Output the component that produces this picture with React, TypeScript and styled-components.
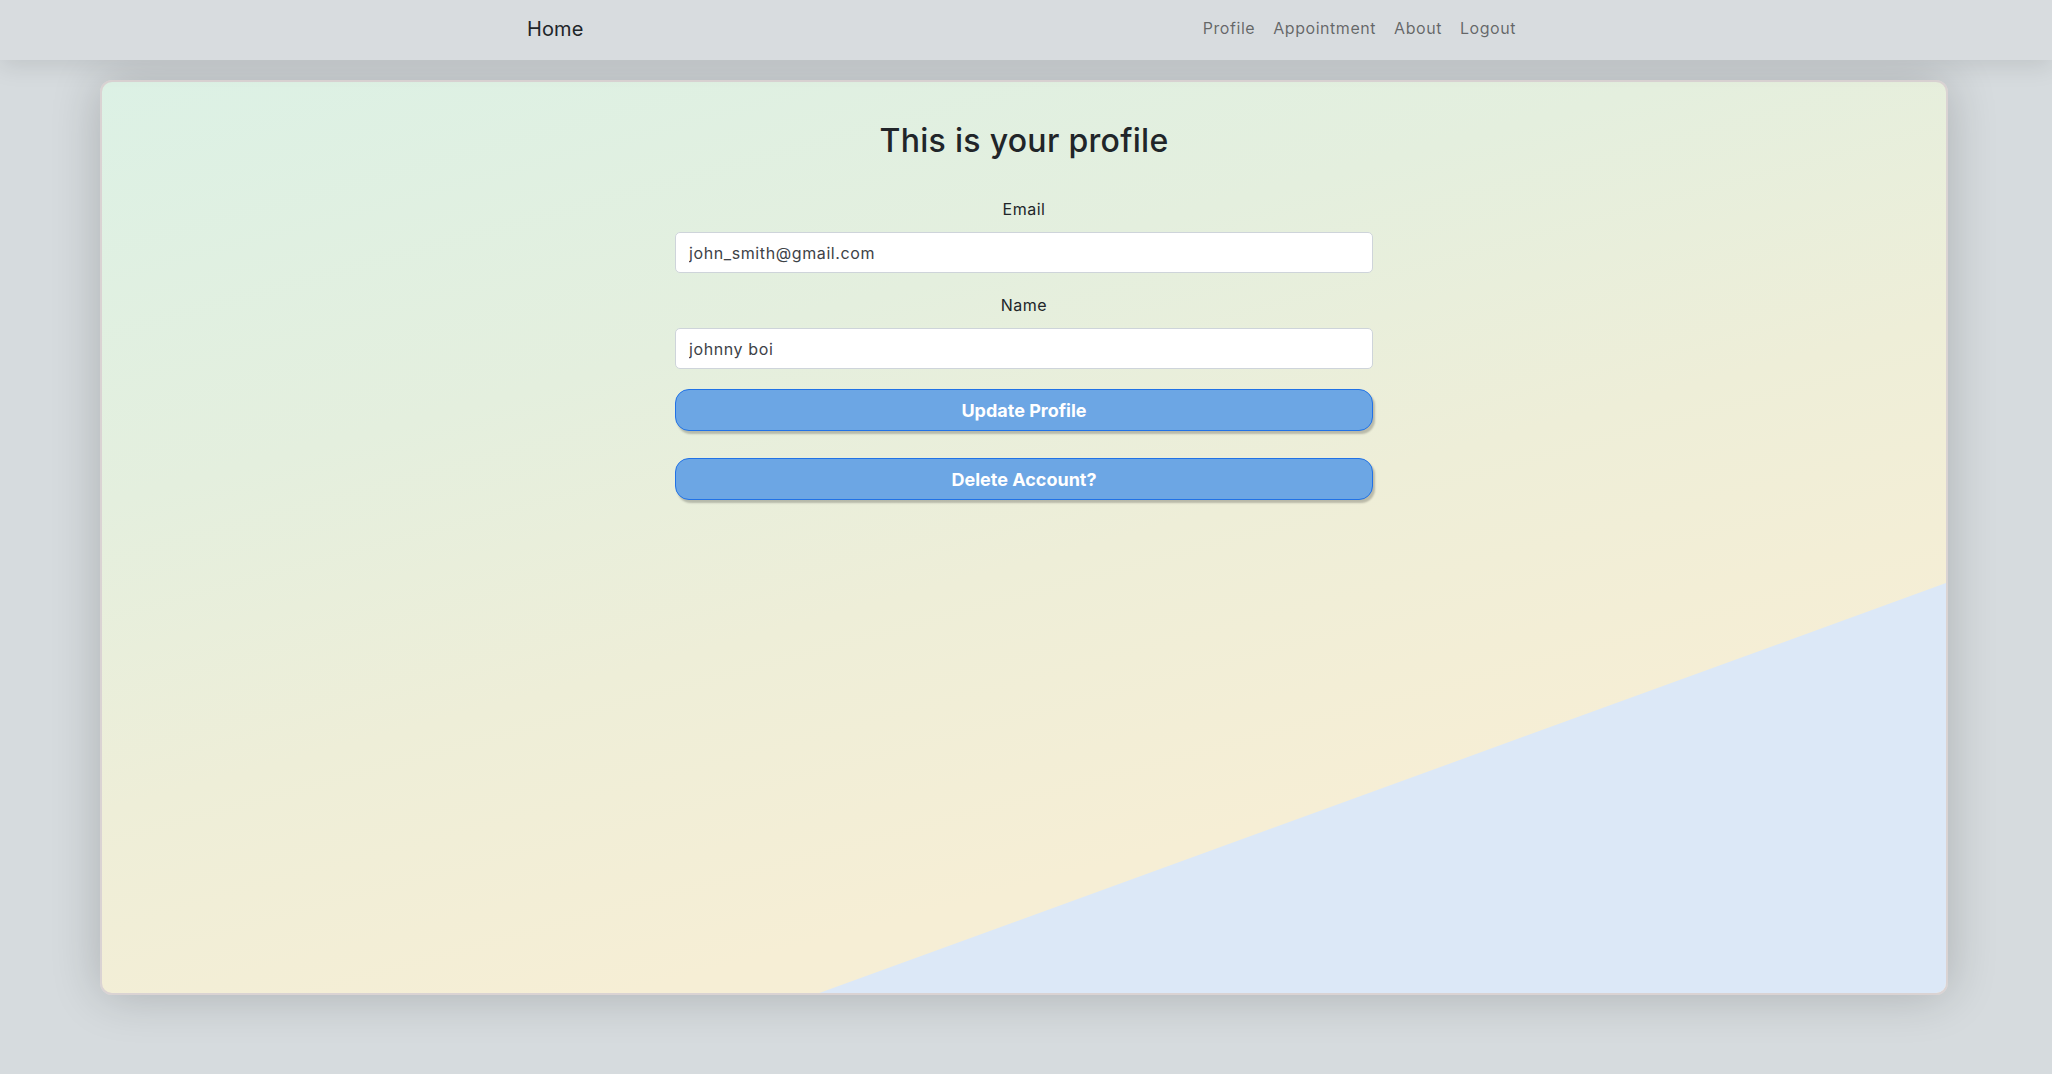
import React from "react";
import styled, { createGlobalStyle } from "styled-components";

const GlobalStyle = createGlobalStyle`
  html, body {
    margin: 0;
    padding: 0;
  }
  body {
    background: #d6dbde;
    font-family: Inter, "Noto Sans", "Liberation Sans", sans-serif;
    color: #212529;
    min-height: 1074px;
  }
  * { box-sizing: border-box; }
`;

const Navbar = styled.nav`
  position: relative;
  z-index: 2;
  height: 60px;
  background: #d8dcdf;
  box-shadow: 0 6px 24px rgba(0, 0, 0, 0.1);
`;

const NavInner = styled.div`
  width: 998px;
  height: 100%;
  margin: 0 auto;
  display: flex;
  align-items: center;
  justify-content: space-between;
`;

const Brand = styled.a`
  font-size: 20px;
  letter-spacing: 0.1px;
  color: #212529;
  text-decoration: none;
  line-height: 30px;
  margin-top: -2px;
`;

const NavLinks = styled.div`
  display: flex;
  align-items: center;
`;

const NavLink = styled.a`
  font-size: 16px;
  letter-spacing: 0.55px;
  line-height: 24px;
  padding: 0 9px;
  color: rgba(0, 0, 0, 0.55);
  text-decoration: none;
  margin-top: -4px;
`;

const Card = styled.main`
  position: relative;
  z-index: 1;
  margin: 20px 0 0 100px;
  width: 1848px;
  height: 915px;
  border: 2px solid #dad3d3;
  border-radius: 12px;
  overflow: hidden;
  background: linear-gradient(165deg, #dcf1e5 0%, #e4efde 30%, #eeeed8 52%, #f6eed5 75%, #f6eed6 100%);
  box-shadow: 0 0 50px rgba(0, 0, 0, 0.2);
  padding-top: 40px;

  &::before {
    content: "";
    position: absolute;
    inset: 0;
    background: #dce8f7;
    clip-path: polygon(38.9% 100%, 100% 55%, 100% 100%);
    z-index: 0;
  }
`;

const Content = styled.div`
  position: relative;
  z-index: 1;
  display: flex;
  flex-direction: column;
  align-items: center;
`;

const Title = styled.h2`
  margin: 0;
  font-size: 32px;
  font-weight: 500;
  letter-spacing: 0.3px;
  line-height: 1.2;
  color: #212529;
`;

const Form = styled.form`
  width: 698px;
  margin-top: 37px;
  display: flex;
  flex-direction: column;
`;

const Field = styled.div<{ $gap?: number }>`
  display: flex;
  flex-direction: column;
  align-items: center;
  margin-bottom: ${(p) => p.$gap ?? 20}px;
`;

const Label = styled.label`
  font-size: 16px;
  letter-spacing: 0.5px;
  line-height: 24px;
  color: #212529;
  margin-bottom: 11px;
`;

const Input = styled.input`
  width: 100%;
  height: 41px;
  padding: 0 13px;
  font-family: Inter, "Noto Sans", "Liberation Sans", sans-serif;
  font-size: 16px;
  letter-spacing: 0.6px;
  color: #3d4247;
  background: #ffffff;
  border: 1px solid #ced4da;
  border-radius: 5px;
  outline: none;
`;

const Button = styled.button<{ $mb?: number }>`
  width: 100%;
  height: 42px;
  margin-bottom: ${(p) => p.$mb ?? 0}px;
  background: #6ca6e4;
  border: 1.5px solid #2172e6;
  border-radius: 14px;
  box-shadow: 2px 3px 2px rgba(0, 0, 0, 0.22);
  color: #ffffff;
  font-family: Inter, "Noto Sans", "Liberation Sans", sans-serif;
  font-size: 18px;
  font-weight: 700;
  cursor: pointer;
`;

export default function App() {
  return (
    <>
      <GlobalStyle />
      <Navbar>
        <NavInner>
          <Brand href="#">Home</Brand>
          <NavLinks>
            <NavLink href="#">Profile</NavLink>
            <NavLink href="#">Appointment</NavLink>
            <NavLink href="#">About</NavLink>
            <NavLink href="#">Logout</NavLink>
          </NavLinks>
        </NavInner>
      </Navbar>
      <Card>
        <Content>
          <Title>This is your profile</Title>
          <Form onSubmit={(e) => e.preventDefault()}>
            <Field>
              <Label>Email</Label>
              <Input defaultValue="john_smith@gmail.com" />
            </Field>
            <Field>
              <Label>Name</Label>
              <Input defaultValue="johnny boi" />
            </Field>
            <Button type="button" $mb={27}>Update Profile</Button>
            <Button type="button">Delete Account?</Button>
          </Form>
        </Content>
      </Card>
    </>
  );
}
